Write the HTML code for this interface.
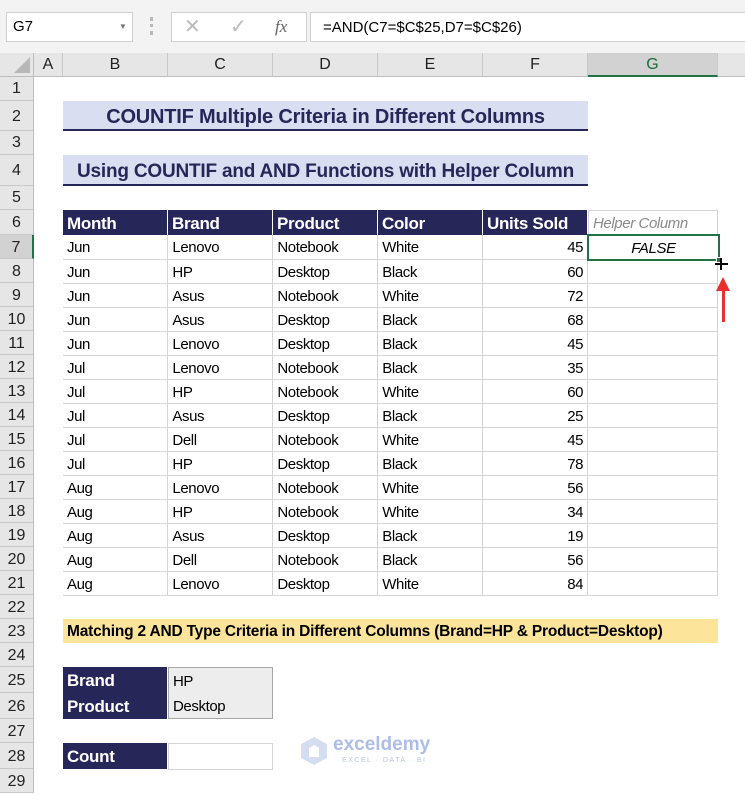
<!DOCTYPE html>
<html><head><meta charset="utf-8"><style>
*{margin:0;padding:0;box-sizing:border-box}
body{width:745px;height:782px;overflow:hidden;background:#fff;font-family:"Liberation Sans",sans-serif;position:relative}
.a{position:absolute}
.t{font-size:15px;color:#000;white-space:nowrap;line-height:24px;letter-spacing:-0.4px}
.ch{position:absolute;top:53px;height:24px;background:#e6e6e6;border-right:1px solid #c8c8c8;border-bottom:1px solid #bdbdbd;text-align:center;font-size:16px;line-height:24px;color:#222}
.rh{position:absolute;left:0;width:34px;background:#e6e6e6;border-bottom:1px solid #c8c8c8;border-right:1px solid #bdbdbd;text-align:center;font-size:16px;color:#222}
.hd{background:#262659;color:#fff;font-weight:bold;font-size:17px;padding-left:4px;line-height:27px;border-right:1px solid #fff;letter-spacing:-0.3px}
.c{border-right:1px solid #d4d4d4;border-bottom:1px solid #d4d4d4;padding:3px 0 0 4px;line-height:20px;vertical-align:top}
</style></head><body>
<div class="a" style="left:0;top:0;width:745px;height:53px;background:#f3f3f3"></div>
<div class="a" style="left:6px;top:12px;width:127px;height:30px;background:#fff;border:1px solid #d0d0d0;font-size:15px;line-height:28px;padding-left:6px">G7<span style="position:absolute;left:112px;top:0;font-size:8px;color:#777">▼</span></div>
<div class="a" style="left:150px;top:17px;width:3px;height:18px;border-left:3px dotted #b8b8b8"></div>
<div class="a" style="left:171px;top:12px;width:136px;height:30px;background:#fff;border:1px solid #d0d0d0;color:#bbb;font-size:20px;line-height:28px"><span style="position:absolute;left:12px">✕</span><span style="position:absolute;left:58px">✓</span><span style="position:absolute;left:103px;font-family:'Liberation Serif',serif;font-style:italic;color:#666;font-size:17px">fx</span></div>
<div class="a" style="left:310px;top:12px;width:440px;height:30px;background:#fff;border:1px solid #d0d0d0;font-size:15px;line-height:30px;padding-left:12px">=AND(C7=$C$25,D7=$C$26)</div>
<div class="a" style="left:0;top:53px;width:34px;height:24px;background:#e6e6e6;border-right:1px solid #bdbdbd;border-bottom:1px solid #bdbdbd"></div>
<div class="a" style="left:14px;top:57px;width:0;height:0;border-left:16px solid transparent;border-bottom:16px solid #b8b8b8"></div>
<div class="ch" style="left:34px;width:29px">A</div>
<div class="ch" style="left:63px;width:105px">B</div>
<div class="ch" style="left:168px;width:105px">C</div>
<div class="ch" style="left:273px;width:105px">D</div>
<div class="ch" style="left:378px;width:105px">E</div>
<div class="ch" style="left:483px;width:105px">F</div>
<div class="ch" style="left:588px;width:130px;background:#d2d2d2;color:#1e6b3a;border-bottom:2px solid #217346">G</div>
<div class="ch" style="left:718px;width:27px;border-right:none"></div>
<div class="rh" style="top:77px;height:24px;line-height:24px">1</div>
<div class="rh" style="top:101px;height:30px;line-height:32px">2</div>
<div class="rh" style="top:131px;height:24px;line-height:24px">3</div>
<div class="rh" style="top:155px;height:31px;line-height:32px">4</div>
<div class="rh" style="top:186px;height:24px;line-height:24px">5</div>
<div class="rh" style="top:210px;height:25px;line-height:26px">6</div>
<div class="rh" style="top:235px;height:24px;line-height:26px;background:#d2d2d2;border-right:2px solid #217346">7</div>
<div class="rh" style="top:259px;height:24px;line-height:26px">8</div>
<div class="rh" style="top:283px;height:24px;line-height:26px">9</div>
<div class="rh" style="top:307px;height:24px;line-height:26px">10</div>
<div class="rh" style="top:331px;height:24px;line-height:26px">11</div>
<div class="rh" style="top:355px;height:24px;line-height:26px">12</div>
<div class="rh" style="top:379px;height:24px;line-height:26px">13</div>
<div class="rh" style="top:403px;height:24px;line-height:26px">14</div>
<div class="rh" style="top:427px;height:24px;line-height:26px">15</div>
<div class="rh" style="top:451px;height:24px;line-height:26px">16</div>
<div class="rh" style="top:475px;height:24px;line-height:26px">17</div>
<div class="rh" style="top:499px;height:24px;line-height:26px">18</div>
<div class="rh" style="top:523px;height:24px;line-height:26px">19</div>
<div class="rh" style="top:547px;height:24px;line-height:26px">20</div>
<div class="rh" style="top:571px;height:24px;line-height:26px">21</div>
<div class="rh" style="top:595px;height:24px;line-height:26px">22</div>
<div class="rh" style="top:619px;height:24px;line-height:26px">23</div>
<div class="rh" style="top:643px;height:24px;line-height:26px">24</div>
<div class="rh" style="top:667px;height:26px;line-height:28px">25</div>
<div class="rh" style="top:693px;height:26px;line-height:28px">26</div>
<div class="rh" style="top:719px;height:24px;line-height:26px">27</div>
<div class="rh" style="top:743px;height:26px;line-height:28px">28</div>
<div class="rh" style="top:769px;height:24px;line-height:26px">29</div>
<div class="a" style="left:63px;top:101px;width:525px;height:30px;background:#d9dff1;border-bottom:2px solid #262659;text-align:center;font-weight:bold;font-size:20px;color:#262659;line-height:32px;letter-spacing:-0.2px">COUNTIF Multiple Criteria in Different Columns</div>
<div class="a" style="left:63px;top:155px;width:525px;height:31px;background:#d9dff1;border-bottom:2px solid #262659;text-align:center;font-weight:bold;font-size:19px;color:#262659;line-height:33px;letter-spacing:-0.2px">Using COUNTIF and AND Functions with Helper Column</div>
<div class="a hd" style="left:63px;top:210px;width:105px;height:25px">Month</div>
<div class="a hd" style="left:168px;top:210px;width:105px;height:25px">Brand</div>
<div class="a hd" style="left:273px;top:210px;width:105px;height:25px">Product</div>
<div class="a hd" style="left:378px;top:210px;width:105px;height:25px">Color</div>
<div class="a hd" style="left:483px;top:210px;width:105px;height:25px">Units Sold</div>
<div class="a t" style="left:588px;top:210px;width:130px;height:25px;border:1px solid #d4d4d4;color:#8a8a8a;font-style:italic;padding-left:4px;line-height:25px">Helper Column</div>
<div class="a" style="left:63px;top:235px;width:655px;height:360px">
<table style="border-collapse:collapse;font-size:15px;letter-spacing:-0.4px;table-layout:fixed">
<colgroup><col style="width:105px"><col style="width:105px"><col style="width:105px"><col style="width:105px"><col style="width:105px"><col style="width:130px"></colgroup>
<tbody>
<tr style="height:24px"><td class="c">Jun</td><td class="c">Lenovo</td><td class="c">Notebook</td><td class="c">White</td><td class="c" style="text-align:right;padding-right:4px">45</td><td class="c"></td></tr>
<tr style="height:24px"><td class="c">Jun</td><td class="c">HP</td><td class="c">Desktop</td><td class="c">Black</td><td class="c" style="text-align:right;padding-right:4px">60</td><td class="c"></td></tr>
<tr style="height:24px"><td class="c">Jun</td><td class="c">Asus</td><td class="c">Notebook</td><td class="c">White</td><td class="c" style="text-align:right;padding-right:4px">72</td><td class="c"></td></tr>
<tr style="height:24px"><td class="c">Jun</td><td class="c">Asus</td><td class="c">Desktop</td><td class="c">Black</td><td class="c" style="text-align:right;padding-right:4px">68</td><td class="c"></td></tr>
<tr style="height:24px"><td class="c">Jun</td><td class="c">Lenovo</td><td class="c">Desktop</td><td class="c">Black</td><td class="c" style="text-align:right;padding-right:4px">45</td><td class="c"></td></tr>
<tr style="height:24px"><td class="c">Jul</td><td class="c">Lenovo</td><td class="c">Notebook</td><td class="c">Black</td><td class="c" style="text-align:right;padding-right:4px">35</td><td class="c"></td></tr>
<tr style="height:24px"><td class="c">Jul</td><td class="c">HP</td><td class="c">Notebook</td><td class="c">White</td><td class="c" style="text-align:right;padding-right:4px">60</td><td class="c"></td></tr>
<tr style="height:24px"><td class="c">Jul</td><td class="c">Asus</td><td class="c">Desktop</td><td class="c">Black</td><td class="c" style="text-align:right;padding-right:4px">25</td><td class="c"></td></tr>
<tr style="height:24px"><td class="c">Jul</td><td class="c">Dell</td><td class="c">Notebook</td><td class="c">White</td><td class="c" style="text-align:right;padding-right:4px">45</td><td class="c"></td></tr>
<tr style="height:24px"><td class="c">Jul</td><td class="c">HP</td><td class="c">Desktop</td><td class="c">Black</td><td class="c" style="text-align:right;padding-right:4px">78</td><td class="c"></td></tr>
<tr style="height:24px"><td class="c">Aug</td><td class="c">Lenovo</td><td class="c">Notebook</td><td class="c">White</td><td class="c" style="text-align:right;padding-right:4px">56</td><td class="c"></td></tr>
<tr style="height:24px"><td class="c">Aug</td><td class="c">HP</td><td class="c">Notebook</td><td class="c">White</td><td class="c" style="text-align:right;padding-right:4px">34</td><td class="c"></td></tr>
<tr style="height:24px"><td class="c">Aug</td><td class="c">Asus</td><td class="c">Desktop</td><td class="c">Black</td><td class="c" style="text-align:right;padding-right:4px">19</td><td class="c"></td></tr>
<tr style="height:24px"><td class="c">Aug</td><td class="c">Dell</td><td class="c">Notebook</td><td class="c">Black</td><td class="c" style="text-align:right;padding-right:4px">56</td><td class="c"></td></tr>
<tr style="height:24px"><td class="c">Aug</td><td class="c">Lenovo</td><td class="c">Desktop</td><td class="c">White</td><td class="c" style="text-align:right;padding-right:4px">84</td><td class="c"></td></tr>
</tbody></table></div>
<div class="a t" style="left:587px;top:234px;width:133px;height:27px;border:2px solid #217346;text-align:center;font-style:italic;line-height:25px;background:#fff">FALSE</div>
<div class="a" style="left:716px;top:257px;width:6px;height:6px;background:#217346;border:1px solid #fff"></div>
<div class="a" style="left:715px;top:263px;width:13px;height:2px;background:#000"></div>
<div class="a" style="left:720px;top:258px;width:2px;height:12px;background:#000"></div>
<div class="a" style="left:716px;top:277px;width:0;height:0;border-left:7px solid transparent;border-right:7px solid transparent;border-bottom:14px solid #e8302f"></div>
<div class="a" style="left:722px;top:290px;width:3px;height:32px;background:#e8302f"></div>
<div class="a" style="left:63px;top:619px;width:655px;height:24px;background:#fde49b;font-weight:bold;font-size:15.5px;line-height:26px;padding-left:4px;letter-spacing:-0.2px;white-space:nowrap">Matching 2 AND Type Criteria in Different Columns (Brand=HP &amp; Product=Desktop)</div>
<div class="a hd" style="left:63px;top:667px;width:105px;height:26px;line-height:28px">Brand</div>
<div class="a t" style="left:168px;top:667px;width:105px;height:27px;background:#ededed;border:1px solid #a8a8a8;padding-left:4px;line-height:28px">HP</div>
<div class="a hd" style="left:63px;top:693px;width:105px;height:26px;line-height:28px">Product</div>
<div class="a t" style="left:168px;top:693px;width:105px;height:26px;background:#ededed;border:1px solid #a8a8a8;border-top:none;padding-left:4px;line-height:28px">Desktop</div>
<div class="a hd" style="left:63px;top:743px;width:105px;height:26px;line-height:28px">Count</div>
<div class="a" style="left:168px;top:743px;width:105px;height:27px;border:1px solid #d4d4d4"></div>
<div class="a" style="left:300px;top:736px;width:28px;height:28px;opacity:.35">
<svg width="28" height="30" viewBox="0 0 28 30"><path d="M14 1 L27 8 L27 22 L14 29 L1 22 L1 8Z" fill="#8aa0d8"/><path d="M9 12 L14 9 L19 12 L19 21 L9 21Z" fill="#fff"/></svg></div>
<div class="a" style="left:333px;top:734px;font-size:19px;font-weight:bold;color:#aebde6">exceldemy</div>
<div class="a" style="left:342px;top:757px;font-size:7px;color:#b8c4e6;letter-spacing:1.5px">EXCEL · DATA · BI</div>
</body></html>
